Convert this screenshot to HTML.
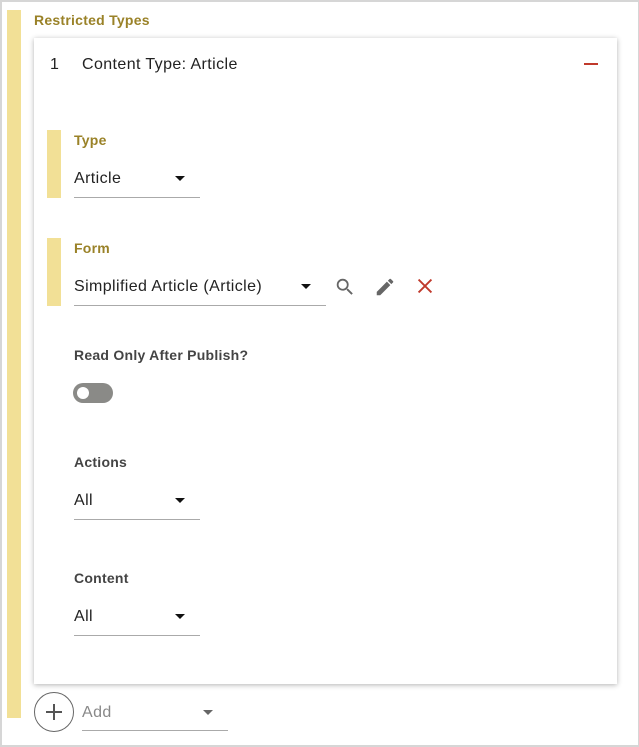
<!DOCTYPE html>
<html><head><style>
*{margin:0;padding:0;box-sizing:border-box}
body{width:639px;height:747px;background:#fff;font-family:"Liberation Sans",sans-serif;position:relative;overflow:hidden}
.frame{position:absolute;left:0;top:0;width:639px;height:747px;border:2px solid #d6d6d6;border-right-width:1px}
.abs{position:absolute}
.bar{background:#f2e096}
.lbl{font-weight:bold;font-size:14px;color:#9a8228;letter-spacing:0.25px}
.lbl2{font-weight:bold;font-size:14px;color:#444;letter-spacing:0.25px}
.txt{font-size:16px;color:#222;letter-spacing:0.4px;margin-top:1px}
.line{height:1px;background:#aaa}
.tri{width:0;height:0;border-left:5px solid transparent;border-right:5px solid transparent;border-top:5px solid #111}
</style></head><body>
<div class="frame"></div>
<div class="abs bar" style="left:7px;top:10px;width:14px;height:708px"></div>
<div class="abs lbl" style="left:34px;top:12px">Restricted Types</div>
<div class="abs" style="left:34px;top:38px;width:583px;height:646px;background:#fff;box-shadow:0 1px 5px rgba(0,0,0,.3)"></div>
<div class="abs txt" style="left:50px;top:55px">1</div>
<div class="abs txt" style="left:82px;top:55px">Content Type: Article</div>
<div class="abs" style="left:584px;top:63px;width:14px;height:2px;background:#c0392b"></div>

<div class="abs bar" style="left:47px;top:130px;width:14px;height:68px"></div>
<div class="abs lbl" style="left:74px;top:132px">Type</div>
<div class="abs txt" style="left:74px;top:169px">Article</div>
<div class="abs tri" style="left:175px;top:176px"></div>
<div class="abs line" style="left:74px;top:197px;width:126px"></div>

<div class="abs bar" style="left:47px;top:238px;width:14px;height:68px"></div>
<div class="abs lbl" style="left:74px;top:240px">Form</div>
<div class="abs txt" style="left:74px;top:277px">Simplified Article (Article)</div>
<div class="abs tri" style="left:301px;top:284px"></div>
<div class="abs line" style="left:74px;top:305px;width:252px"></div>
<svg class="abs" style="left:334px;top:276px" width="22" height="22" viewBox="0 0 24 24"><path fill="#666" d="M15.5 14h-.79l-.28-.27A6.47 6.47 0 0 0 16 9.5 6.5 6.5 0 1 0 9.5 16c1.610 0 3.09-.59 4.23-1.57l.27.28v.79l5 4.99L20.49 19l-4.99-5zm-6 0C7.01 14 5 11.99 5 9.5S7.01 5 9.5 5 14 7.01 14 9.5 11.99 14 9.5 14z"/></svg>
<svg class="abs" style="left:374px;top:276px" width="22" height="22" viewBox="0 0 24 24"><path fill="#666" d="M3 17.25V21h3.75L17.81 9.94l-3.75-3.75L3 17.25zM20.710 7.04a1 1 0 0 0 0-1.41l-2.34-2.34a1 1 0 0 0-1.41 0l-1.83 1.83 3.75 3.75 1.83-1.83z"/></svg>
<svg class="abs" style="left:414px;top:275px" width="22" height="22" viewBox="0 0 24 24"><path stroke="#c0392b" stroke-width="2" d="M5 5L19 19M19 5L5 19"/></svg>

<div class="abs lbl2" style="left:74px;top:347px">Read Only After Publish?</div>
<div class="abs" style="left:73px;top:383px;width:40px;height:20px;border-radius:10px;background:#8a8a87"></div>
<div class="abs" style="left:77px;top:387px;width:12px;height:12px;border-radius:6px;background:#fff"></div>

<div class="abs lbl2" style="left:74px;top:454px">Actions</div>
<div class="abs txt" style="left:74px;top:491px">All</div>
<div class="abs tri" style="left:175px;top:498px"></div>
<div class="abs line" style="left:74px;top:519px;width:126px"></div>

<div class="abs lbl2" style="left:74px;top:570px">Content</div>
<div class="abs txt" style="left:74px;top:607px">All</div>
<div class="abs tri" style="left:175px;top:614px"></div>
<div class="abs line" style="left:74px;top:635px;width:126px"></div>

<div class="abs" style="left:34px;top:692px;width:40px;height:40px;border-radius:20px;border:1px solid #666"></div>
<div class="abs" style="left:46px;top:711px;width:16px;height:2px;background:#555"></div>
<div class="abs" style="left:53px;top:704px;width:2px;height:16px;background:#555"></div>
<div class="abs txt" style="left:82px;top:703px;color:#888">Add</div>
<div class="abs tri" style="left:203px;top:710px;border-top-color:#666"></div>
<div class="abs line" style="left:82px;top:730px;width:146px"></div>
</body></html>
